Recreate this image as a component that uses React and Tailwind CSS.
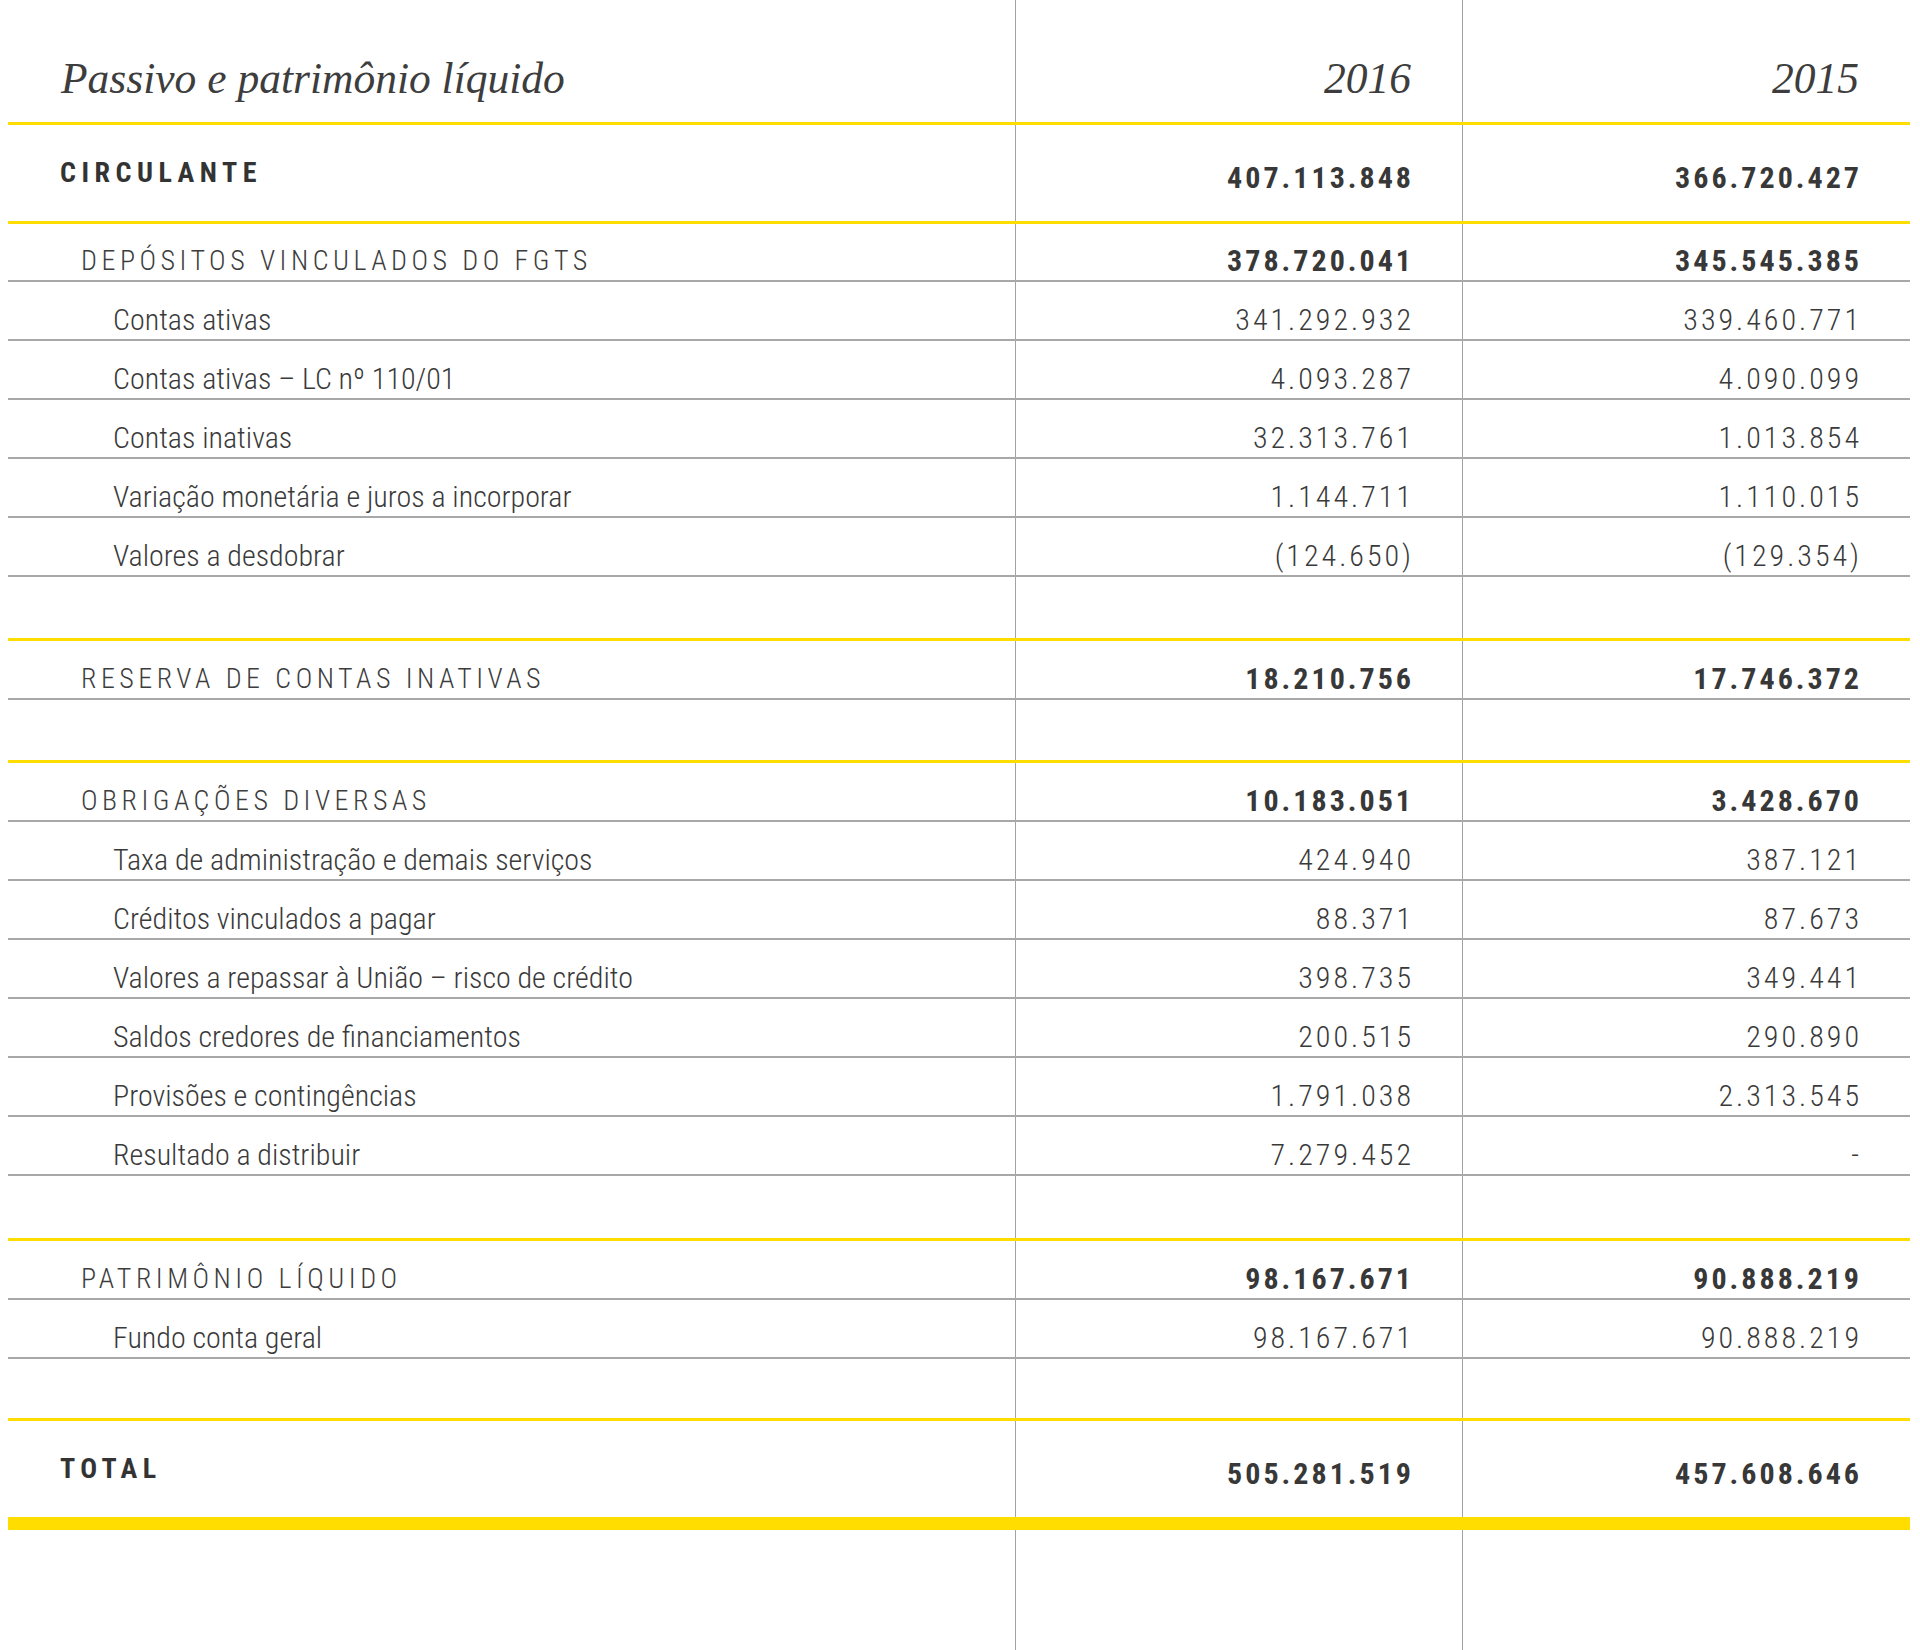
const sections = [
  {
    head: "DEPÓSITOS VINCULADOS DO FGTS",
    a: "378.720.041",
    b: "345.545.385",
    h: "h-[56px]",
    after: "h-[61px]",
    items: [
      ["Contas ativas", "341.292.932", "339.460.771"],
      ["Contas ativas – LC nº 110/01", "4.093.287", "4.090.099"],
      ["Contas inativas", "32.313.761", "1.013.854"],
      ["Variação monetária e juros a incorporar", "1.144.711", "1.110.015"],
      ["Valores a desdobrar", "(124.650)", "(129.354)"],
    ],
  },
  {
    head: "RESERVA DE CONTAS INATIVAS",
    a: "18.210.756",
    b: "17.746.372",
    h: "h-[57px]",
    after: "h-[60px]",
    items: [],
  },
  {
    head: "OBRIGAÇÕES DIVERSAS",
    a: "10.183.051",
    b: "3.428.670",
    h: "h-[57px]",
    after: "h-[62px]",
    items: [
      ["Taxa de administração e demais serviços", "424.940", "387.121"],
      ["Créditos vinculados a pagar", "88.371", "87.673"],
      ["Valores a repassar à União – risco de crédito", "398.735", "349.441"],
      ["Saldos credores de financiamentos", "200.515", "290.890"],
      ["Provisões e contingências", "1.791.038", "2.313.545"],
      ["Resultado a distribuir", "7.279.452", "-"],
    ],
  },
  {
    head: "PATRIMÔNIO LÍQUIDO",
    a: "98.167.671",
    b: "90.888.219",
    h: "h-[57px]",
    after: "h-[59px]",
    items: [["Fundo conta geral", "98.167.671", "90.888.219"]],
  },
];

const cond = "font-['Roboto_Condensed','Roboto',sans-serif]";
const bold = `${cond} text-[30px] leading-none font-bold tracking-[3px] text-[#383838]`;
const light = `${cond} text-[30px] leading-none font-light tracking-[3px] text-[#3a3a3a]`;

// one table line: label cell + two number cells, the vertical rules are the cells' left borders
function Row({ className, left, mid, right, numClass = "" }) {
  return (
    <div className={`grid grid-cols-[1007px_447px_448px] ${className}`}>
      <div className="flex">{left}</div>
      <div className={`flex justify-end border-l border-[#a3a3a3] pr-[48px] ${numClass}`}>{mid}</div>
      <div className={`flex justify-end border-l border-[#a3a3a3] pr-[48px] ${numClass}`}>{right}</div>
    </div>
  );
}

function Yellow({ thick }) {
  return <div className={`${thick ? "h-[13px]" : "h-[3px]"} bg-[#ffdd00]`} />;
}

function Gray() {
  return <div className="h-[2px] bg-[#a8a8a8]" />;
}

function MainRow({ label, a, b }) {
  return (
    <Row
      className="h-[96px]"
      left={
        <span className={`${cond} self-center pl-[52px] text-[28px] leading-none font-bold tracking-[5.5px] text-[#333]`}>
          {label}
        </span>
      }
      numClass="items-center pt-[10px]"
      mid={<span className={bold}>{a}</span>}
      right={<span className={bold}>{b}</span>}
    />
  );
}

function GroupRow({ label, a, b, h }) {
  return (
    <Row
      className={h}
      left={
        <span className={`${cond} self-end pb-[5px] pl-[73px] text-[28px] leading-none font-light tracking-[4.5px] text-[#3d3d3d]`}>
          {label}
        </span>
      }
      numClass="items-end pb-[4px]"
      mid={<span className={bold}>{a}</span>}
      right={<span className={bold}>{b}</span>}
    />
  );
}

function ItemRow({ label, a, b }) {
  return (
    <Row
      className="h-[57px]"
      left={
        <span className={`${cond} self-end pb-[4px] pl-[105px] text-[30px] leading-none font-light text-[#3a3a3a]`}>
          {label}
        </span>
      }
      numClass="items-end pb-[4px]"
      mid={<span className={light}>{a}</span>}
      right={<span className={light}>{b}</span>}
    />
  );
}

export default function App() {
  const serif = "font-['Liberation_Serif',serif] italic text-[43.5px] leading-none text-[#3d3d3d]";
  return (
    <div className="min-h-[1650px] w-full bg-white">
      <div className="ml-[8px] flex min-h-[1650px] w-[1902px] flex-col">
        <Row
          className="h-[122px]"
          left={<span className={`${serif} self-end pb-[22px] pl-[53px]`}>Passivo e patrimônio líquido</span>}
          numClass="items-end pb-[22px] pr-[51px]"
          mid={<span className={serif}>2016</span>}
          right={<span className={serif}>2015</span>}
        />
        <Yellow />
        <MainRow label="CIRCULANTE" a="407.113.848" b="366.720.427" />
        <Yellow />
        {sections.map((s, i) => (
          <div key={s.head} className="flex flex-col">
            {i > 0 && <Yellow />}
            <GroupRow label={s.head} a={s.a} b={s.b} h={s.h} />
            <Gray />
            {s.items.map(([label, a, b]) => (
              <div key={label} className="flex flex-col">
                <ItemRow label={label} a={a} b={b} />
                <Gray />
              </div>
            ))}
            <Row className={s.after} />
          </div>
        ))}
        <Yellow />
        <MainRow label="TOTAL" a="505.281.519" b="457.608.646" />
        <Yellow thick />
        <Row className="flex-1" />
      </div>
    </div>
  );
}
